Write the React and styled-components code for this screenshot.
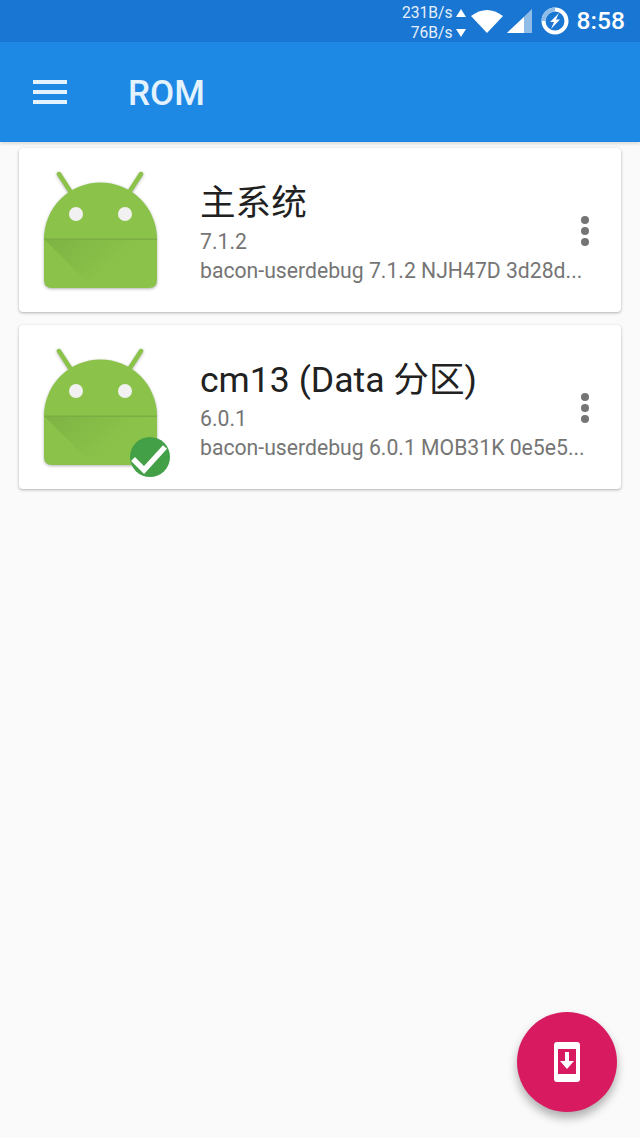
import React from 'react';
import styled, {createGlobalStyle} from 'styled-components';

const Global = createGlobalStyle`
html, body {
    margin: 0;
    padding: 0;
    background: #FAFAFA;
    font-family: Roboto, "Noto Sans CJK SC", sans-serif;
}
`;

const Page = styled.div`
    position: relative;
    width: 640px;
    height: 1138px;
    overflow: hidden;
    background: #FAFAFA;
`;

const StatusBar = styled.div`
    height: 42px;
    background: #1976D2;
    display: flex;
    align-items: center;
    justify-content: flex-end;
    color: #FFFFFF;
`;

const Speed = styled.div`
    display: flex;
    flex-direction: column;
    align-items: flex-end;
    font-size: 15.6px;
    line-height: 20px;
    margin: 3px 4px 0 0;
    color: #E6F0FA;
`;

const SpeedRow = styled.div`
    display: flex;
    align-items: center;
    gap: 2px;
`;

const Clock = styled.span`
    font-size: 24.6px;
    font-weight: 500;
    margin: 0 15px 0 8px;
    line-height: 42px;
`;

const Toolbar = styled.div`
    height: 100px;
    background: #1E88E5;
    display: flex;
    align-items: center;
    padding-left: 33px;
    box-shadow: 0 2px 3px rgba(0, 0, 0, 0.12);
`;

const MenuBars = styled.div`
    width: 34px;
    display: flex;
    flex-direction: column;
    gap: 6px;
    span {
        height: 4px;
        background: #E3F2FD;
    }
`;

const Title = styled.h1`
    margin: 2px 0 0 61px;
    font-size: 35px;
    font-weight: 500;
    color: #E3F2FD;
`;

const List = styled.div`
    display: flex;
    flex-direction: column;
    gap: 13px;
    padding: 6px 19px 0;
`;

const Card = styled.div`
    height: 164px;
    background: #FFFFFF;
    border-radius: 4px;
    box-shadow: 0 1px 3px rgba(0, 0, 0, 0.3);
    display: flex;
    align-items: flex-start;
    padding: 23px 0 0 24px;
    box-sizing: border-box;
`;

const IconWrap = styled.div`
    position: relative;
    width: 116px;
    height: 120px;
    flex-shrink: 0;
`;

const Robot = styled.svg`
    filter: drop-shadow(0 1.5px 1.5px rgba(0, 0, 0, 0.3));
`;

const Badge = styled.svg`
    position: absolute;
    left: 87px;
    top: 89px;
`;

const Info = styled.div`
    margin-left: 41px;
    width: 384px;
    min-width: 0;
`;

const Name = styled.div`
    font-size: 35.6px;
    line-height: 46px;
    margin-top: 9px;
    color: #212121;
    white-space: nowrap;
`;

const Version = styled.div`
    font-size: 21.2px;
    line-height: 26px;
    margin-top: 3px;
    color: #757575;
`;

const Desc = styled.div`
    font-size: 21.2px;
    line-height: 26px;
    margin-top: 3px;
    color: #757575;
    white-space: nowrap;
`;

const More = styled.div`
    margin: 45px 0 0 -3px;
    display: flex;
    flex-direction: column;
    gap: 3px;
    span {
        width: 8px;
        height: 8px;
        border-radius: 50%;
        background: #757575;
    }
`;

const Fab = styled.button`
    position: absolute;
    left: 517px;
    top: 1012px;
    width: 100px;
    height: 100px;
    border: none;
    padding: 0;
    border-radius: 50%;
    background: #D81B60;
    box-shadow: 0 6px 10px rgba(0, 0, 0, 0.3);
    display: flex;
    align-items: center;
    justify-content: center;
`;

function AndroidIcon({id}) {
    return (
        <Robot width="116" height="120" viewBox="0 0 116 120">
            <defs>
                <linearGradient id={id} x1="0" y1="0" x2="0.75" y2="0.35">
                    <stop offset="0" stopColor="#5E8C33" stopOpacity="0.3" />
                    <stop offset="1" stopColor="#5E8C33" stopOpacity="0" />
                </linearGradient>
            </defs>
            <line x1="16" y1="3" x2="29" y2="23" stroke="#8BC34A" strokeWidth="4.500" strokeLinecap="round" />
            <line x1="98" y1="3" x2="85" y2="23" stroke="#8BC34A" strokeWidth="4.500" strokeLinecap="round" />
            <path d="M1 68 A56.500 56.500 0 0 1 114 68 L114 109 Q114 117 106 117 L9 117 Q1 117 1 109 Z" fill="#8BC34A" />
            <path d="M1 68 L114 68 L114 117 L50 117 Z" fill={`url(#${id})`} />
            <rect x="1" y="67.500" width="113" height="1.500" fill="#7CAD45" />
            <circle cx="33" cy="43" r="7" fill="#F1F1F1" />
            <circle cx="82" cy="43" r="7" fill="#F1F1F1" />
        </Robot>
    );
}

function RomCard({id, name, version, desc, active}) {
    return (
        <Card>
            <IconWrap>
                <AndroidIcon id={id} />
                {active && (
                    <Badge width="40" height="40" viewBox="0 0 40 40">
                        <circle cx="20" cy="20" r="20" fill="#43A047" />
                        <path d="M3 22 L14 33 L35 10" fill="none" stroke="#FFFFFF" strokeWidth="5.500" />
                    </Badge>
                )}
            </IconWrap>
            <Info>
                <Name>{name}</Name>
                <Version>{version}</Version>
                <Desc>{desc}</Desc>
            </Info>
            <More><span /><span /><span /></More>
        </Card>
    );
}

export default function App() {
    return (
        <Page>
            <Global />
            <StatusBar>
                <Speed>
                    <SpeedRow>231B/s
                        <svg width="12" height="10" viewBox="0 0 12 10"><path d="M6 1 L11 9 L1 9 Z" fill="#fff" /></svg>
                    </SpeedRow>
                    <SpeedRow>76B/s
                        <svg width="12" height="10" viewBox="0 0 12 10"><path d="M1 1 L11 1 L6 9 Z" fill="#fff" /></svg>
                    </SpeedRow>
                </Speed>
                <svg width="32" height="24" viewBox="0 0 32 24"><path d="M0 7 Q16 -5 32 7 L16 24 Z" fill="#fff" /></svg>
                <svg width="26" height="26" viewBox="0 0 26 26" style={{marginLeft: 3}}>
                    <path d="M26 1 L26 25 L1 25 Z" fill="#90BCE8" />
                    <path d="M18 9 L18 25 L1 25 Z" fill="#fff" />
                </svg>
                <svg width="28" height="28" viewBox="0 0 28 28" style={{marginLeft: 9}}>
                    <circle cx="14" cy="14" r="11.500" fill="none" stroke="#fff" strokeWidth="4" />
                    <path d="M2.500 14 A11.500 11.500 0 0 1 14 2.500" fill="none" stroke="#90BCE8" strokeWidth="4" />
                    <path d="M18 6 L9 15 L13 15 L10 22 L19 12.500 L15 12.500 Z" fill="#fff" />
                </svg>
                <Clock>8:58</Clock>
            </StatusBar>
            <Toolbar>
                <MenuBars><span /><span /><span /></MenuBars>
                <Title>ROM</Title>
            </Toolbar>
            <List>
                <RomCard id="fold1" name="主系统" version="7.1.2" desc="bacon-userdebug 7.1.2 NJH47D 3d28d..." />
                <RomCard id="fold2" name="cm13 (Data 分区)" version="6.0.1" desc="bacon-userdebug 6.0.1 MOB31K 0e5e5..." active />
            </List>
            <Fab>
                <svg width="26" height="40" viewBox="0 0 26 40">
                    <path fillRule="evenodd" d="M3 0 L23 0 Q26 0 26 3 L26 37 Q26 40 23 40 L3 40 Q0 40 0 37 L0 3 Q0 0 3 0 Z M4 7 L4 32 L22 32 L22 7 Z" fill="#fff" />
                    <path d="M11 10 L15 10 L15 19 L20 19 L13 27 L6 19 L11 19 Z" fill="#fff" />
                </svg>
            </Fab>
        </Page>
    );
}
